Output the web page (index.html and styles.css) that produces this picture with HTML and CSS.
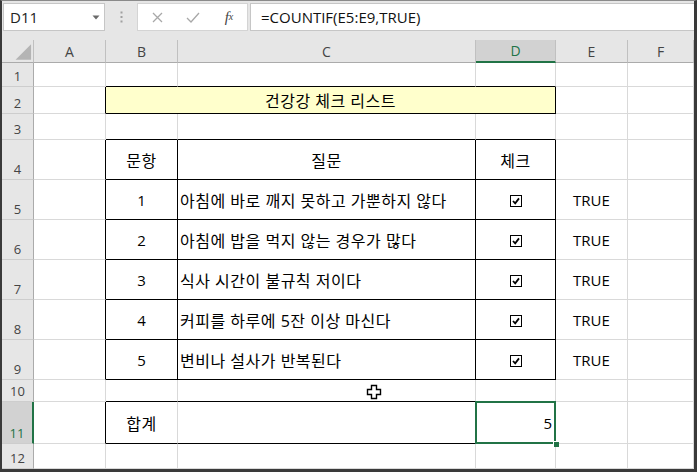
FILE: index.html
```html
<!DOCTYPE html>
<html lang="ko">
<head>
<meta charset="utf-8">
<title>건강 체크 리스트</title>
<link rel="stylesheet" href="styles.css">
</head>
<body>
<div class="frame">
  <div class="toolbar">
    <div class="namebox">
      <span class="nb-text">D11</span>
      <svg class="nb-arrow" width="8" height="5" viewBox="0 0 8 5"><path d="M0.5 0.5 H7.5 L4 4.5 Z" fill="#6a6a6a"/></svg>
    </div>
    <div class="grip">
      <svg width="3" height="12" viewBox="0 0 3 12"><rect x="0.5" y="0.5" width="2" height="2" fill="#a0a0a0"/><rect x="0.5" y="5" width="2" height="2" fill="#a0a0a0"/><rect x="0.5" y="9.5" width="2" height="2" fill="#a0a0a0"/></svg>
    </div>
    <div class="fxbtns">
      <span class="fxb"><svg width="11" height="11" viewBox="0 0 11 11"><path d="M1 1 L10 10 M10 1 L1 10" stroke="#a8a8a8" stroke-width="1.3" fill="none"/></svg></span>
      <span class="fxb"><svg width="14" height="11" viewBox="0 0 14 11"><path d="M1 6 L5 10 L13 1" stroke="#a8a8a8" stroke-width="1.3" fill="none"/></svg></span>
      <span class="fxb fx">f<sub>x</sub></span>
    </div>
    <div class="formula">=COUNTIF(E5:E9,TRUE)</div>
  </div>

  <div class="sheet">
    <div class="c h corner"><svg width="32" height="23" viewBox="0 0 32 23"><path d="M14 20 H30 V4 Z" fill="#b4b4b4"/></svg></div>
    <div class="c h">A</div>
    <div class="c h">B</div>
    <div class="c h">C</div>
    <div class="c h selcol">D</div>
    <div class="c h">E</div>
    <div class="c h">F</div>

    <div class="c rh">1</div>
    <div class="c"></div>
    <div class="c kb"></div>
    <div class="c kb"></div>
    <div class="c kb"></div>
    <div class="c"></div>
    <div class="c"></div>

    <div class="c rh">2</div>
    <div class="c kr"></div>
    <div class="c title kr kb ctr ko">건강강 체크 리스트</div>
    <div class="c"></div>
    <div class="c"></div>

    <div class="c rh">3</div>
    <div class="c"></div>
    <div class="c kb"></div>
    <div class="c kb"></div>
    <div class="c kb"></div>
    <div class="c"></div>
    <div class="c"></div>

    <div class="c rh">4</div>
    <div class="c kr"></div>
    <div class="c kr kb ctr ko">문항</div>
    <div class="c kr kb ctr ko">질문</div>
    <div class="c kr kb ctr ko">체크</div>
    <div class="c"></div>
    <div class="c"></div>

    <div class="c rh">5</div>
    <div class="c kr"></div>
    <div class="c kr kb ctr">1</div>
    <div class="c kr kb lt ko">아침에 바로 깨지 못하고 가뿐하지 않다</div>
    <div class="c kr kb ctr"><svg class="cb" width="12" height="12" viewBox="0 0 12 12"><rect x="0.5" y="0.5" width="11" height="11" fill="#fff" stroke="#000"/><path d="M3 6 L5.2 8.4 L9 3.4" stroke="#000" stroke-width="1.8" fill="none"/></svg></div>
    <div class="c ctr">TRUE</div>
    <div class="c"></div>

    <div class="c rh">6</div>
    <div class="c kr"></div>
    <div class="c kr kb ctr">2</div>
    <div class="c kr kb lt ko">아침에 밥을 먹지 않는 경우가 많다</div>
    <div class="c kr kb ctr"><svg class="cb" width="12" height="12" viewBox="0 0 12 12"><rect x="0.5" y="0.5" width="11" height="11" fill="#fff" stroke="#000"/><path d="M3 6 L5.2 8.4 L9 3.4" stroke="#000" stroke-width="1.8" fill="none"/></svg></div>
    <div class="c ctr">TRUE</div>
    <div class="c"></div>

    <div class="c rh">7</div>
    <div class="c kr"></div>
    <div class="c kr kb ctr">3</div>
    <div class="c kr kb lt ko">식사 시간이 불규칙 저이다</div>
    <div class="c kr kb ctr"><svg class="cb" width="12" height="12" viewBox="0 0 12 12"><rect x="0.5" y="0.5" width="11" height="11" fill="#fff" stroke="#000"/><path d="M3 6 L5.2 8.4 L9 3.4" stroke="#000" stroke-width="1.8" fill="none"/></svg></div>
    <div class="c ctr">TRUE</div>
    <div class="c"></div>

    <div class="c rh">8</div>
    <div class="c kr"></div>
    <div class="c kr kb ctr">4</div>
    <div class="c kr kb lt ko">커피를 하루에 5잔 이상 마신다</div>
    <div class="c kr kb ctr"><svg class="cb" width="12" height="12" viewBox="0 0 12 12"><rect x="0.5" y="0.5" width="11" height="11" fill="#fff" stroke="#000"/><path d="M3 6 L5.2 8.4 L9 3.4" stroke="#000" stroke-width="1.8" fill="none"/></svg></div>
    <div class="c ctr">TRUE</div>
    <div class="c"></div>

    <div class="c rh">9</div>
    <div class="c kr"></div>
    <div class="c kr kb ctr">5</div>
    <div class="c kr kb lt ko">변비나 설사가 반복된다</div>
    <div class="c kr kb ctr"><svg class="cb" width="12" height="12" viewBox="0 0 12 12"><rect x="0.5" y="0.5" width="11" height="11" fill="#fff" stroke="#000"/><path d="M3 6 L5.2 8.4 L9 3.4" stroke="#000" stroke-width="1.8" fill="none"/></svg></div>
    <div class="c ctr">TRUE</div>
    <div class="c"></div>

    <div class="c rh">10</div>
    <div class="c"></div>
    <div class="c kb"></div>
    <div class="c kb"></div>
    <div class="c kb"></div>
    <div class="c"></div>
    <div class="c"></div>

    <div class="c rh selrow">11</div>
    <div class="c kr"></div>
    <div class="c kb ctr ko">합계</div>
    <div class="c kb"></div>
    <div class="c kr kb rt active">5</div>
    <div class="c"></div>
    <div class="c"></div>

    <div class="c rh">12</div>
    <div class="c"></div>
    <div class="c"></div>
    <div class="c"></div>
    <div class="c"></div>
    <div class="c"></div>
    <div class="c"></div>
  </div>

  <svg class="cursor" width="16" height="16" viewBox="0 0 16 16"><path d="M5.5 1.5 H10.5 V5.5 H14.5 V10.5 H10.5 V14.5 H5.5 V10.5 H1.5 V5.5 H5.5 Z" fill="#fff" stroke="#000" stroke-width="1.4"/></svg>
</div>
</body>
</html>
```
FILE: styles.css
```css
html, body {
  margin: 0;
  padding: 0;
  background: #fff;
}

.frame {
  position: relative;
  width: 697px;
  height: 472px;
  box-sizing: border-box;
  border-style: solid;
  border-color: #3a3a3a;
  border-top-color: #8a8a8a;
  border-width: 1px 3px 3px 2px;
  background: #fff;
  display: flex;
  flex-direction: column;
  overflow: hidden;
  font-family: "Open Sans", "Noto Sans CJK KR", sans-serif;
  color: #000;
}

/* ---------- formula bar ---------- */
.toolbar {
  height: 39px;
  flex: none;
  box-sizing: border-box;
  padding: 2px 0 0 1px;
  background: #e6e6e6;
  display: flex;
  align-items: flex-start;
}

.namebox {
  width: 102px;
  height: 28px;
  box-sizing: border-box;
  background: #fff;
  border: 1px solid #c6c6c6;
  display: flex;
  align-items: center;
  padding-left: 6px;
  font-size: 15px;
  color: #222;
}

.nb-arrow {
  margin-left: auto;
  margin-right: 4px;
}

.grip {
  width: 32px;
  height: 28px;
  display: flex;
  align-items: center;
  justify-content: center;
}

.fxbtns {
  width: 111px;
  height: 28px;
  box-sizing: border-box;
  background: #fff;
  border: 1px solid #d4d4d4;
  display: flex;
  align-items: center;
  padding-left: 1px;
}

.fxb {
  width: 36px;
  display: flex;
  justify-content: center;
  align-items: center;
}

.fx {
  font-family: "Liberation Serif", serif;
  font-style: italic;
  font-size: 15px;
  color: #444;
  line-height: 1;
}

.fx sub {
  font-size: 10px;
  vertical-align: -1px;
}

.formula {
  flex: 1;
  margin-left: 2px;
  height: 28px;
  box-sizing: border-box;
  background: #fff;
  border: 1px solid #c6c6c6;
  border-right: none;
  padding-left: 10px;
  display: flex;
  align-items: center;
  font-size: 15px;
  color: #111;
}

/* ---------- sheet grid ---------- */
.sheet {
  flex: 1;
  display: grid;
  grid-template-columns: 32px 72px 72px 298px 80px 72px 1fr;
  grid-template-rows: 23px 24px 27px 26px 40px 40px 40px 40px 40px 40px 22px 42px 1fr;
}

.c {
  box-sizing: border-box;
  border-right: 1px solid #d9d9d9;
  border-bottom: 1px solid #d9d9d9;
  display: flex;
  align-items: center;
  font-size: 15px;
  white-space: nowrap;
  overflow: visible;
}

.ko {
  font-size: 16px;
  letter-spacing: 0.5px;
}

.h {
  background: #e6e6e6;
  border-right-color: #c0c0c0;
  border-bottom-color: #ababab;
  justify-content: center;
  font-size: 14px;
  color: #444;
}

.corner {
  align-items: stretch;
}

.selcol {
  background: #d2d2d2;
  border-bottom: 2px solid #217346;
  color: #217346;
}

.rh {
  background: #e6e6e6;
  border-right-color: #ababab;
  border-bottom-color: #cdcdcd;
  justify-content: center;
  align-items: flex-end;
  padding-bottom: 1px;
  font-size: 13px;
  color: #444;
}

.selrow {
  background: #d2d2d2;
  border-right: 2px solid #217346;
  color: #217346;
}

.kr { border-right-color: #000; }
.kb { border-bottom-color: #000; }

.ctr { justify-content: center; }
.lt { padding-left: 2px; }
.rt { justify-content: flex-end; padding-right: 3px; }

.title {
  grid-column: span 3;
  background: #ffffcc;
}

.cb {
  margin-top: 3px;
}

.active {
  position: relative;
  z-index: 2;
}

.active::after {
  content: "";
  position: absolute;
  left: -1px;
  top: -1px;
  right: -1px;
  bottom: -1px;
  border: 2px solid #217346;
}

.active::before {
  content: "";
  position: absolute;
  right: -4px;
  bottom: -4px;
  width: 5px;
  height: 5px;
  background: #217346;
  border-left: 1px solid #fff;
  border-top: 1px solid #fff;
  z-index: 3;
}

.cursor {
  position: absolute;
  left: 364px;
  top: 383px;
  z-index: 5;
}
```
